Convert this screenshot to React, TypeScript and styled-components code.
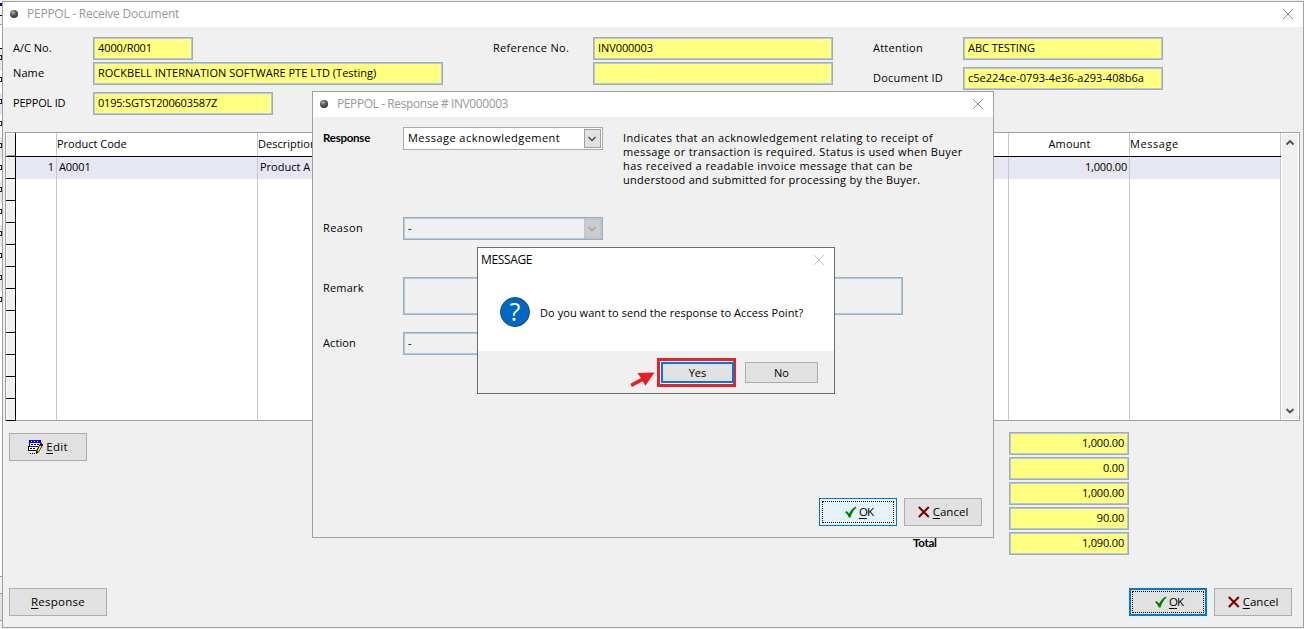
import React from "react";
import styled, { createGlobalStyle, css } from "styled-components";

const GlobalStyle = createGlobalStyle`
  * { box-sizing: border-box; }
  body {
    margin: 0;
    overflow: hidden;
    background: #f0f0f0;
    color: #000;
    font: 11px/14px "Open Sans", "Noto Sans", sans-serif;
  }
`;

const Desktop = styled.div`
  position: relative;
  display: flex;
  width: 1304px;
  height: 629px;
  padding: 1px 0;
  background: #f0f0f0;
  overflow: hidden;
`;

/* Visible edge of the list window lying behind the document window */
const BackEdge = styled.div`
  flex: none;
  width: 2px;
  height: 627px;
  background: #fff;
  overflow: hidden;
`;
const EdgeTop = styled.div`
  height: 48px;
  background: linear-gradient(#fff 2px, #0000e0 2px 5px, #fff 5px 14px, #000 14px 15px, #f0f0f0 15px 23px, #a0a0a0 23px 24px, #fff 24px 47px, #000 47px);
`;
const EdgeRow = styled.div<{ $shaded: boolean }>`
  height: 22px;
  padding-top: 6px;
  background: ${(p) => (p.$shaded ? "#e6e6f2" : "#fff")};
`;
const EdgeMark = styled.div`
  width: 2px;
  height: 5px;
  border: solid #222;
  border-width: 1px 1px 1px 0;
`;
const EdgeBlank = styled.div`
  height: 263px;
`;
const EdgeFoot = styled.div`
  height: 60px;
  background: linear-gradient(#a0a0a0 1px, #f0f0f0 1px 17px, #a0a0a0 17px 18px, #e1e1e1 18px 44px, #a0a0a0 44px 45px, #f0f0f0 45px);
`;

const Spaced = styled.span<{ $ls?: number }>`
  letter-spacing: ${(p) => p.$ls ?? 0}px;
  white-space: pre;
`;

const windowFrame = css`
  display: flex;
  flex-direction: column;
  border: 1px solid #a0a0a0;
  background: #f0f0f0;
`;
const DocumentWindow = styled.main`
  ${windowFrame}
  width: 1302px;
  height: 627px;
`;
const ResponseWindow = styled.section`
  ${windowFrame}
  position: absolute;
  left: 312px;
  top: 91px;
  width: 682px;
  height: 447px;
`;
const MessageWindow = styled.section`
  ${windowFrame}
  position: absolute;
  left: 477px;
  top: 247px;
  width: 358px;
  height: 147px;
  border-color: #6b6b6b;
`;

const TitleBar = styled.header`
  display: flex;
  align-items: center;
  flex: none;
  height: 25px;
  padding: 0 9px 1px 7px;
  background: #fff;
  color: #999;
  font-size: 12px;
`;
const Sphere = styled.i`
  width: 8px;
  height: 8px;
  margin-right: 9px;
  border-radius: 50%;
  background: radial-gradient(circle at 38% 32%, #c0c0c0 0, #686868 30%, #333 75%);
`;
const TitleText = styled.span<{ $ls: number }>`
  flex: 1;
  letter-spacing: ${(p) => p.$ls}px;
`;

const TopFields = styled.div`
  display: grid;
  grid-template-columns: 480px 380px 300px;
  height: 105px;
  padding: 10px 0 0 10px;
`;
const FieldColumn = styled.div`
  display: flex;
  flex-direction: column;
`;
const FieldRow = styled.div<{ $label: number; $gap?: number }>`
  display: grid;
  grid-template-columns: ${(p) => p.$label}px auto;
  justify-content: start;
  margin-bottom: ${(p) => p.$gap ?? 0}px;
  line-height: 22px;
`;
const Field = styled.div<{ $w: number; $right?: boolean }>`
  width: ${(p) => p.$w}px;
  height: 23px;
  padding: 0 4px;
  border: 1px solid #a7abb0;
  box-shadow: inset 0 0 0 1px #a9c9e6;
  background: #ffff80;
  line-height: 20px;
  text-align: ${(p) => (p.$right ? "right" : "left")};
  white-space: nowrap;
`;

const Table = styled.div`
  display: flex;
  width: 1295px;
  height: 289px;
  margin-left: 2px;
  border: 1px solid #a0a0a0;
  background: #fff;
`;
const Indicator = styled.div`
  width: 10px;
  border-right: 1px solid #000;
  height: 288px;
`;
const IndicatorHead = styled.div`
  height: 24px;
  border-bottom: 1px solid #000;
  background: #f0f0f0;
  box-shadow: inset 1px 1px #fff, inset 0 -1px #a0a0a0;
`;
const IndicatorCell = styled.div`
  height: 22px;
  border-bottom: 1px solid #000;
  background: #f0f0f0;
  box-shadow: inset 1px 1px #fff;
`;
const Column = styled.div<{ $w: number }>`
  width: ${(p) => p.$w}px;
  border-right: 1px solid #c8c8c8;
`;
const HeadCell = styled.div<{ $center?: boolean }>`
  height: 24px;
  margin-right: -1px;
  border-bottom: 1px solid #000;
  line-height: 22px;
  text-align: ${(p) => (p.$center ? "center" : "left")};
`;
const Cell = styled.div<{ $right?: boolean }>`
  height: 22px;
  padding: 0 2px;
  background: #e6e7f2;
  line-height: 20px;
  text-align: ${(p) => (p.$right ? "right" : "left")};
`;
const Scrollbar = styled.div`
  display: flex;
  flex-direction: column;
  justify-content: space-between;
  align-items: center;
  width: 16px;
  margin: 1px;
  padding: 5px 1px 4px 0;
  background: #f0f0f0;
  color: #505050;
`;

const Middle = styled.div`
  display: flex;
  justify-content: space-between;
  height: 167px;
  padding: 11px 174px 0 6px;
`;
const EditSlot = styled.div`
  padding-top: 1px;
`;
const Totals = styled.div`
  display: grid;
  grid-template-columns: 96px 120px;
  grid-auto-rows: 23px;
  row-gap: 2px;
`;
const BoldLabel = styled.b<{ $ls: number }>`
  font: bold 11.5px/22px Lato, sans-serif;
  letter-spacing: ${(p) => p.$ls}px;
`;
const Bottom = styled.div`
  display: flex;
  justify-content: space-between;
  padding: 0 11px 0 6px;
`;
const ButtonGroup = styled.div`
  display: flex;
  gap: 7px;
`;

const buttonKinds = {
  plain: css`
    border: 1px solid #adadad;
    background: #e1e1e1;
  `,
  focused: css`
    border: 2px solid #0078d7;
    background: #e1e1e1;
    outline: 1px dotted #000;
    outline-offset: -4px;
  `,
  hot: css`
    border: 1px solid #0078d7;
    background: #e5f1fb;
    outline: 1px dotted #000;
    outline-offset: -4px;
  `,
};
const Button = styled.button<{ $w?: number; $kind?: keyof typeof buttonKinds }>`
  display: flex;
  align-items: center;
  justify-content: center;
  gap: 3px;
  width: ${(p) => p.$w ?? 78}px;
  height: 28px;
  padding: 0;
  color: #000;
  font: inherit;
  font-size: 11.5px;
  ${(p) => buttonKinds[p.$kind ?? "plain"]}
`;
const AcceptButton = styled(Button)`
  gap: 2px;
  padding-left: 2px;
`;
const MessageButton = styled(Button)`
  width: 73px;
  height: 21px;
  font-size: 11px;
  outline: none;
`;
const Mnemonic = styled.u`
  text-underline-offset: 2px;
  text-decoration-thickness: 1px;
  text-decoration-skip-ink: none;
`;

const ResponseBody = styled.div`
  display: grid;
  grid-template-columns: 80px 200px 1fr;
  grid-template-rows: 90px 60px 55px 23px;
  height: 381px;
  padding: 10px 10px 0;
  line-height: 22px;
`;
const Combo = styled.div<{ $disabled?: boolean }>`
  display: flex;
  justify-content: space-between;
  width: 200px;
  height: 23px;
  padding: 1px 1px 1px 4px;
  border: 1px solid #a7abb0;
  background: ${(p) => (p.$disabled ? "#f0f0f0" : "#fff")};
  box-shadow: ${(p) => (p.$disabled ? "inset 0 0 0 1px #a9c9e6" : "none")};
  line-height: 18px;
`;
const DropButton = styled.i<{ $disabled?: boolean }>`
  display: flex;
  align-items: center;
  justify-content: center;
  width: 17px;
  height: 19px;
  padding-right: 1px;
  border: 1px solid ${(p) => (p.$disabled ? "#c4c4c4" : "#a0a0a0")};
  background: ${(p) => (p.$disabled ? "#cccccc" : "#e1e1e1")};
  color: ${(p) => (p.$disabled ? "#a0a0a0" : "#444")};
`;
const RemarkBox = styled.div`
  grid-column: 2 / 4;
  width: 500px;
  height: 38px;
  border: 1px solid #a7abb0;
  box-shadow: inset 0 0 0 1px #a9c9e6;
`;
const Explanation = styled.p`
  display: flex;
  flex-direction: column;
  margin: 0;
  padding: 4px 0 0 20px;
  line-height: 14px;
`;
const ResponseFooter = styled.footer`
  display: flex;
  justify-content: flex-end;
  gap: 7px;
  padding-right: 11px;
`;

const MessageTitle = styled(TitleBar)`
  height: 24px;
  padding: 0 9px 0 3px;
  color: #000;
`;
const MessageContent = styled.div`
  display: flex;
  align-items: center;
  gap: 10px;
  height: 79px;
  padding: 1px 0 0 22px;
  background: #fff;
`;
const MessageText = styled.span`
  padding-top: 2px;
  letter-spacing: 0.06px;
`;
const QuestionBadge = styled.span`
  width: 30px;
  height: 30px;
  border: 1px solid #17497a;
  border-radius: 50%;
  background: #0067c4;
  color: #fff;
  font: 25px/26px "Open Sans", sans-serif;
  text-align: center;
`;
const MessageFooter = styled.footer`
  display: flex;
  align-items: flex-start;
  justify-content: flex-end;
  gap: 9px;
  padding: 7px 16px 0 0;
`;
const Highlight = styled.div`
  width: 79px;
  height: 29px;
  padding: 1px 0 0 1px;
  border: 3px solid #e8202a;
`;
const NoSlot = styled.div`
  padding-top: 4px;
`;
const Pointer = styled.svg`
  margin: 14px -7px 0 0;
`;

const CloseIcon = ({ color = "#909090" }: { color?: string }) => (
  <svg width="12" height="12" viewBox="0 0 12 12" fill="none" stroke={color}>
    <path d="M1 1L11 11M11 1L1 11" />
  </svg>
);
const Chevron = ({ up, w = 1.3 }: { up?: boolean; w?: number }) => (
  <svg width="10" height="8" viewBox="0 0 10 8" fill="none" stroke="currentColor" strokeWidth={w}>
    <path d={up ? "M1.5 5.5L5 2L8.5 5.5" : "M1.5 2L5 5.5L8.5 2"} />
  </svg>
);
const CheckIcon = () => (
  <svg width="12" height="12" viewBox="0 0 12 12" fill="#008000">
    <path d="M0 6.2L1.6 5L4.2 7.6C5.6 4.4 8 1.6 11 .4L11.4 1.8C8.7 4 6.8 7.4 5.6 11.4H3.8C3.2 9.6 1.6 7.4 0 6.2Z" />
  </svg>
);
const CrossIcon = () => (
  <svg width="12" height="12" viewBox="0 0 12 12" fill="none" stroke="#800000" strokeWidth="2.1">
    <path d="M.8 1L10.8 11M10.8 1L.8 11" />
  </svg>
);
const EditIcon = () => (
  <svg width="15" height="15" viewBox="0 0 15 15" shapeRendering="crispEdges">
    <path fill="#fff" d="M1 0H13V12H1Z" />
    <path fill="#00f" d="M1 0H13V3H1ZM1 3H2V7H1ZM12 3H13V6H12ZM1 6H10V7H1Z" />
    <path fill="#fff" d="M3 1H4V2H3ZM6 1H7V2H6ZM9 1H10V2H9Z" />
    <path fill="#000" d="M3 4H5V5H3ZM6 4H8V5H6ZM9 4H11V5H9ZM0 6H1V11H0ZM0 10H8V11H0ZM2 8H4V9H2ZM5 8H7V9H5ZM2 13H3V14H2ZM4 13H5V14H4ZM6 13H7V14H6Z" />
    <path fill="#000" shapeRendering="auto" d="M8 14V11L12 3.4L15 5L11 12Z" />
    <path fill="#ff0" shapeRendering="auto" d="M9 11.6L12 5.4L13.5 6.2L10.6 11.6Z" />
    <path fill="#800000" d="M12 3H14V4H15V5H13V4H12Z" />
  </svg>
);

const OkButton = ({ kind }: { kind: "focused" | "hot" }) => (
  <AcceptButton $kind={kind}>
    <CheckIcon />
    <Spaced $ls={-0.9}><Mnemonic>O</Mnemonic>K</Spaced>
  </AcceptButton>
);
const CancelButton = () => (
  <Button>
    <CrossIcon />
    <Spaced><Mnemonic>C</Mnemonic>ancel</Spaced>
  </Button>
);

const totals = ["1,000.00", "0.00", "1,000.00", "90.00", "1,090.00"];
const explanation: [string, number][] = [
  ["Indicates that an acknowledgement relating to receipt of", 0.38],
  ["message or transaction is required. Status is used when Buyer", 0.35],
  ["has received a readable invoice message that can be", 0.42],
  ["understood and submitted for processing by the Buyer.", 0.25],
];

export default function App() {
  return (
    <>
      <GlobalStyle />
      <Desktop>
        <BackEdge>
          <EdgeTop />
          {Array.from({ length: 12 }, (_, i) => (
            <EdgeRow key={i} $shaded={i % 2 === 0}><EdgeMark /></EdgeRow>
          ))}
          <EdgeBlank />
          <EdgeFoot />
        </BackEdge>

        <DocumentWindow>
          <TitleBar>
            <Sphere />
            <TitleText $ls={-0.24}>PEPPOL - Receive Document</TitleText>
            <CloseIcon />
          </TitleBar>

          <TopFields>
            <FieldColumn>
              <FieldRow $label={80} $gap={2}>
                <Spaced>A/C No.</Spaced>
                <Field $w={100}><Spaced $ls={-0.1}>4000/R001</Spaced></Field>
              </FieldRow>
              <FieldRow $label={80} $gap={7}>
                <Spaced $ls={0.1}>Name</Spaced>
                <Field $w={350}><Spaced $ls={0.01}>ROCKBELL INTERNATION SOFTWARE PTE LTD (Testing)</Spaced></Field>
              </FieldRow>
              <FieldRow $label={80}>
                <Spaced $ls={-0.2}>PEPPOL ID</Spaced>
                <Field $w={180}><Spaced $ls={-0.2}>0195:SGTST200603587Z</Spaced></Field>
              </FieldRow>
            </FieldColumn>
            <FieldColumn>
              <FieldRow $label={100} $gap={2}>
                <Spaced $ls={0.29}>Reference No.</Spaced>
                <Field $w={240}><Spaced $ls={-0.08}>INV000003</Spaced></Field>
              </FieldRow>
              <FieldRow $label={100}>
                <span />
                <Field $w={240} />
              </FieldRow>
            </FieldColumn>
            <FieldColumn>
              <FieldRow $label={90} $gap={7}>
                <Spaced $ls={0.24}>Attention</Spaced>
                <Field $w={200}><Spaced $ls={-0.05}>ABC TESTING</Spaced></Field>
              </FieldRow>
              <FieldRow $label={90}>
                <Spaced $ls={0.22}>Document ID</Spaced>
                <Field $w={200}><Spaced $ls={0.02}>c5e224ce-0793-4e36-a293-408b6a</Spaced></Field>
              </FieldRow>
            </FieldColumn>
          </TopFields>

          <Table>
            <Indicator>
              <IndicatorHead />
              {Array.from({ length: 12 }, (_, i) => <IndicatorCell key={i} />)}
            </Indicator>
            <Column $w={41}>
              <HeadCell />
              <Cell $right>1</Cell>
            </Column>
            <Column $w={201}>
              <HeadCell><Spaced>Product Code</Spaced></HeadCell>
              <Cell><Spaced $ls={-0.1}>A0001</Spaced></Cell>
            </Column>
            <Column $w={751}>
              <HeadCell><Spaced>Description</Spaced></HeadCell>
              <Cell><Spaced>Product A</Spaced></Cell>
            </Column>
            <Column $w={121}>
              <HeadCell $center><Spaced $ls={0.14}>Amount</Spaced></HeadCell>
              <Cell $right><Spaced $ls={-0.18}>1,000.00</Spaced></Cell>
            </Column>
            <Column $w={151}>
              <HeadCell><Spaced $ls={0.58}>Message</Spaced></HeadCell>
              <Cell />
            </Column>
            <Scrollbar>
              <Chevron up w={1.8} />
              <Chevron w={1.8} />
            </Scrollbar>
          </Table>

          <Middle>
            <EditSlot>
              <Button>
                <EditIcon />
                <Spaced $ls={0.3}><Mnemonic>E</Mnemonic>dit</Spaced>
              </Button>
            </EditSlot>
            <Totals>
              {totals.map((value, i) => (
                <React.Fragment key={i}>
                  <BoldLabel $ls={-0.3}>{i === 4 ? "Total" : ""}</BoldLabel>
                  <Field $w={120} $right><Spaced $ls={-0.18}>{value}</Spaced></Field>
                </React.Fragment>
              ))}
            </Totals>
          </Middle>

          <Bottom>
            <Button $w={98}><Spaced $ls={0.25}><Mnemonic>R</Mnemonic>esponse</Spaced></Button>
            <ButtonGroup>
              <OkButton kind="focused" />
              <CancelButton />
            </ButtonGroup>
          </Bottom>
        </DocumentWindow>

        <ResponseWindow>
          <TitleBar>
            <Sphere />
            <TitleText $ls={-0.41}>PEPPOL - Response # INV000003</TitleText>
            <CloseIcon />
          </TitleBar>
          <ResponseBody>
            <BoldLabel $ls={-0.25}>Response</BoldLabel>
            <Combo>
              <Spaced $ls={0.46}>Message acknowledgement</Spaced>
              <DropButton><Chevron /></DropButton>
            </Combo>
            <Explanation>
              {explanation.map(([line, ls]) => <Spaced key={line} $ls={ls}>{line}</Spaced>)}
            </Explanation>
            <Spaced $ls={0.4}>Reason</Spaced>
            <Combo $disabled>
              -
              <DropButton $disabled><Chevron /></DropButton>
            </Combo>
            <span />
            <Spaced $ls={0.2}>Remark</Spaced>
            <RemarkBox />
            <Spaced $ls={0.1}>Action</Spaced>
            <Combo $disabled>
              -
              <DropButton $disabled><Chevron /></DropButton>
            </Combo>
          </ResponseBody>
          <ResponseFooter>
            <OkButton kind="hot" />
            <CancelButton />
          </ResponseFooter>
        </ResponseWindow>

        <MessageWindow>
          <MessageTitle>
            <TitleText $ls={-0.35}>MESSAGE</TitleText>
            <CloseIcon color="#c4c4c4" />
          </MessageTitle>
          <MessageContent>
            <QuestionBadge>?</QuestionBadge>
            <MessageText>Do you want to send the response to Access Point?</MessageText>
          </MessageContent>
          <MessageFooter>
            <Pointer width="25" height="16" viewBox="0 0 25 16" fill="#ed1c24">
              <path d="M24.5 .5L7.5 1L11 6L.5 11.8L1.8 15L12.7 9.3L15.4 13.7Z" />
            </Pointer>
            <Highlight>
              <MessageButton $kind="focused">Yes</MessageButton>
            </Highlight>
            <NoSlot><MessageButton>No</MessageButton></NoSlot>
          </MessageFooter>
        </MessageWindow>
      </Desktop>
    </>
  );
}
